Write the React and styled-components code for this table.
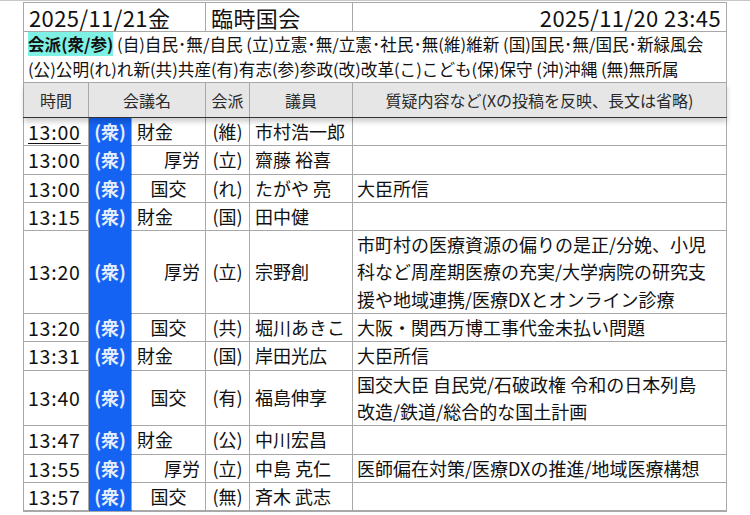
import React from 'react';
import styled, { createGlobalStyle } from 'styled-components';

const GlobalStyle = createGlobalStyle`
  html, body {
    margin: 0;
    padding: 0;
    background: #fff;
    font-family: "Noto Sans CJK JP", "Noto Sans", sans-serif;
    color: #111;
  }
`;

const rows = [
  { time: '13:00', house: '衆', cm: '財金', align: 'left', party: '維', name: '市村浩一郎', note: [], first: true },
  { time: '13:00', house: '衆', cm: '厚労', align: 'right', party: '立', name: '齋藤 裕喜', note: [] },
  { time: '13:00', house: '衆', cm: '国交', align: 'center', party: 'れ', name: 'たがや 亮', note: ['大臣所信'] },
  { time: '13:15', house: '衆', cm: '財金', align: 'left', party: '国', name: '田中健', note: [] },
  {
    time: '13:20', house: '衆', cm: '厚労', align: 'right', party: '立', name: '宗野創',
    note: ['市町村の医療資源の偏りの是正/分娩、小児', '科など周産期医療の充実/大学病院の研究支', '援や地域連携/医療DXとオンライン診療'],
  },
  { time: '13:20', house: '衆', cm: '国交', align: 'center', party: '共', name: '堀川あきこ', note: ['大阪・関西万博工事代金未払い問題'] },
  { time: '13:31', house: '衆', cm: '財金', align: 'left', party: '国', name: '岸田光広', note: ['大臣所信'] },
  {
    time: '13:40', house: '衆', cm: '国交', align: 'center', party: '有', name: '福島伸享',
    note: ['国交大臣 自民党/石破政権 令和の日本列島', '改造/鉄道/総合的な国土計画'],
  },
  { time: '13:47', house: '衆', cm: '財金', align: 'left', party: '公', name: '中川宏昌', note: [] },
  { time: '13:55', house: '衆', cm: '厚労', align: 'right', party: '立', name: '中島 克仁', note: ['医師偏在対策/医療DXの推進/地域医療構想'] },
  { time: '13:57', house: '衆', cm: '国交', align: 'center', party: '無', name: '斉木 武志', note: [] },
  // next row only peeks in at the bottom edge
  { time: '', house: '参', cm: '', align: 'left', party: '', name: '', note: [], empty: true },
];

export default function App() {
  return (
    <>
      <GlobalStyle />
      <Page>
        <Table>
          <colgroup>
            <col style={{ width: 65 }} />
            <col style={{ width: 43 }} />
            <col style={{ width: 74 }} />
            <col style={{ width: 44 }} />
            <col style={{ width: 103 }} />
            <col />
          </colgroup>
          <thead>
            <tr>
              <DateCell colSpan={3}>2025/11/21金</DateCell>
              <DateCell colSpan={2}>臨時国会</DateCell>
              <DateCell $right>2025/11/20 23:45</DateCell>
            </tr>
            <tr>
              <LegendCell colSpan={6}>
                <LegendMark>会派(衆/参)</LegendMark> (自)自民･無/自民 (立)立憲･無/立憲･社民･無(維)維新 (国)国民･無/国民･新緑風会
                <br />
                (公)公明(れ)れ新(共)共産(有)有志(参)参政(改)改革(こ)こども(保)保守 (沖)沖縄 (無)無所属
              </LegendCell>
            </tr>
            <HeadRow>
              <HeadCell>時間</HeadCell>
              <HeadCell colSpan={2}>会議名</HeadCell>
              <HeadCell>会派</HeadCell>
              <HeadCell>議員</HeadCell>
              <HeadCell>質疑内容など(Xの投稿を反映、長文は省略)</HeadCell>
            </HeadRow>
          </thead>
          <tbody>
            {rows.map((r, i) => (
              <tr key={i}>
                <TimeCell $first={r.first}>
                  <span>{r.time}</span>
                </TimeCell>
                <HouseCell $house={r.house}>{r.empty ? '' : `(${r.house})`}</HouseCell>
                <CommitteeCell $align={r.align}>{r.cm}</CommitteeCell>
                <PartyCell>{r.party && `(${r.party})`}</PartyCell>
                <NameCell>{r.name}</NameCell>
                <NoteCell>
                  {r.note.map((line, j) => (
                    <NoteLine key={j}>{line}</NoteLine>
                  ))}
                </NoteCell>
              </tr>
            ))}
          </tbody>
        </Table>
      </Page>
    </>
  );
}

const Page = styled.div`
  border-top: 1px solid #c8c8c8;
  padding: 1px 0 0 23px;
  width: 750px;
  height: 514px;
  box-sizing: border-box;
  overflow: hidden;
`;

const Table = styled.table`
  border-collapse: collapse;
  table-layout: fixed;
  width: 704px;
  font-size: 18px;

  td, th {
    border: 1px solid #a8a8a8;
    padding: 0 4px;
    line-height: 27.3px;
    white-space: nowrap;
    overflow: hidden;
  }
`;

const DateCell = styled.td`
  && {
    font-size: 22px;
    line-height: 28px;
    padding: 0 5px;
    text-align: ${(p) => (p.$right ? 'right' : 'left')};
    letter-spacing: 0.4px;
  }
`;

const LegendCell = styled.td`
  && {
    font-size: 16.6px;
    line-height: 25px;
    padding: 0 4px;
  }
`;

const LegendMark = styled.span`
  background: #7ff0e4;
  font-weight: bold;
`;

const HeadRow = styled.tr`
  position: relative;
  box-shadow: 0 4px 5px rgba(0, 0, 0, 0.18);
`;

const HeadCell = styled.th`
  && {
    background: #e6e6e6;
    font-weight: normal;
    font-size: 16px;
    line-height: 34px;
    color: #2a2a2a;
    text-align: center;
    border-bottom: 1px solid #333;
  }
`;

const TimeCell = styled.td`
  && {
    font-size: 19.5px;
    letter-spacing: 0.8px;
    padding: 0 4px;
  }
  span {
    text-decoration: ${(p) => (p.$first ? 'underline' : 'none')};
    text-decoration-thickness: 1px;
    text-underline-offset: 3px;
  }
`;

const HouseCell = styled.td`
  && {
    background: ${(p) => (p.$house === '衆' ? '#1463f3' : '#fff04a')};
    color: ${(p) => (p.$house === '衆' ? '#e6eeff' : '#333')};
    font-weight: bold;
    text-align: center;
    padding: 0;
    border-top-color: ${(p) => (p.$house === '衆' ? '#1463f3' : '#a8a8a8')};
    border-bottom-color: ${(p) => (p.$house === '衆' ? '#1463f3' : '#a8a8a8')};
  }
`;

const CommitteeCell = styled.td`
  && {
    text-align: ${(p) => p.$align};
    padding: 0 5px;
  }
`;

const PartyCell = styled.td`
  && {
    text-align: center;
    padding: 0;
  }
`;

const NameCell = styled.td`
  && {
    padding: 0 5px;
  }
`;

const NoteCell = styled.td`
  && {
    padding: 0 4px;
  }
`;

const NoteLine = styled.div`
  white-space: nowrap;
`;
